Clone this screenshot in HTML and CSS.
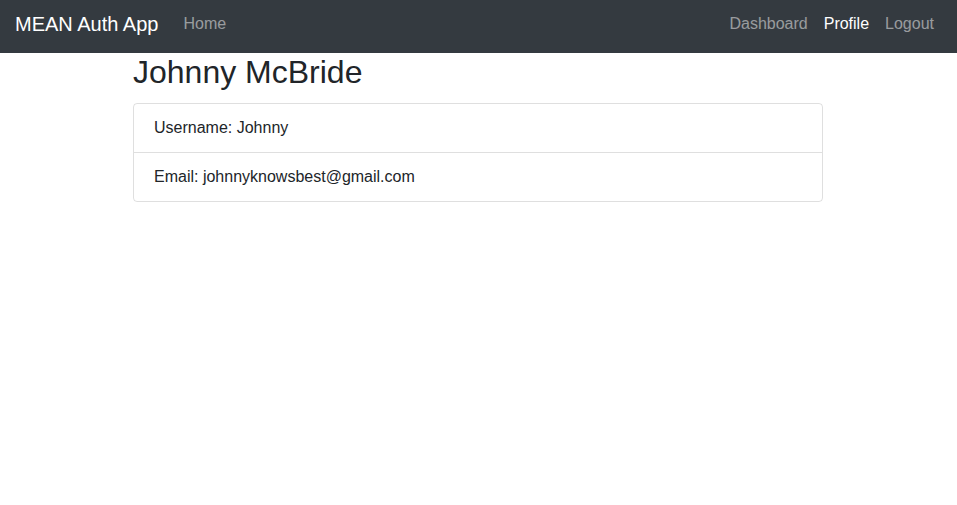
FILE: index.html
```html
<!DOCTYPE html>
<html lang="en">
<head>
<meta charset="utf-8">
<title>MEAN Auth App</title>
<link rel="stylesheet" href="styles.css">
</head>
<body>
<nav class="navbar">
  <a class="brand" href="#">MEAN Auth App</a>
  <ul class="nav nav-left">
    <li><a class="nav-link" href="#">Home</a></li>
  </ul>
  <ul class="nav nav-right">
    <li><a class="nav-link" href="#">Dashboard</a></li>
    <li><a class="nav-link active" href="#">Profile</a></li>
    <li><a class="nav-link" href="#">Logout</a></li>
  </ul>
</nav>
<main class="container">
  <h2 class="title">Johnny McBride</h2>
  <ul class="list-group">
    <li class="list-item">Username: Johnny</li>
    <li class="list-item">Email: johnnyknowsbest@gmail.com</li>
  </ul>
</main>
</body>
</html>
```
FILE: styles.css
```css
* { box-sizing: border-box; }
html, body {
  margin: 0;
  padding: 0;
  background: #fff;
  font-family: "Liberation Sans", Arial, sans-serif;
  font-size: 16px;
  line-height: 1.5;
  color: #212529;
}
a { text-decoration: none; }
.navbar {
  display: flex;
  align-items: center;
  height: 53px;
  padding: 0 15px 5px 15px;
  background: #343a40;
}
.brand {
  color: #fff;
  font-size: 20px;
  line-height: 30px;
  margin-right: 17px;
}
.nav {
  display: flex;
  list-style: none;
  margin: 0;
  padding: 0;
}
.nav-right { margin-left: auto; }
.nav-link {
  display: block;
  padding: 0 8px;
  color: rgba(255,255,255,.5);
  line-height: 24px;
}
.nav-link.active { color: #fff; }
.container {
  width: 720px;
  margin: 0 auto;
  padding: 0 15.5px 0 14.5px;
}
.title {
  margin: 0 0 12px;
  font-size: 32px;
  font-weight: 500;
  line-height: 38px;
}
.list-group {
  list-style: none;
  margin: 0;
  padding: 0;
  border: 1px solid rgba(0,0,0,.125);
  border-radius: 4px;
}
.list-item {
  padding: 12px 20px;
  line-height: 24px;
}
.list-item + .list-item {
  border-top: 1px solid rgba(0,0,0,.125);
}
```
